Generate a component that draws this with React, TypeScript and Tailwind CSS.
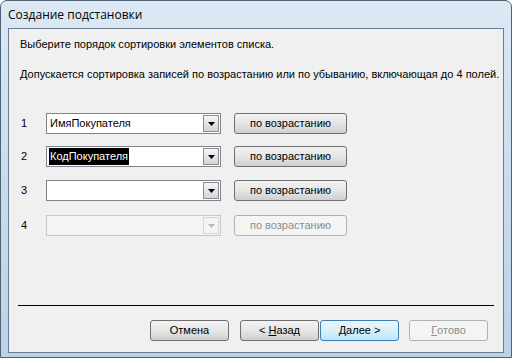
import React from 'react';

const rows = [
  { n: '1', value: 'ИмяПокупателя', selected: false, disabled: false },
  { n: '2', value: 'КодПокупателя', selected: true, disabled: false },
  { n: '3', value: '', selected: false, disabled: false },
  { n: '4', value: '', selected: false, disabled: true },
];

function Arrow({ disabled }: { disabled?: boolean }) {
  return (
    <svg width="7" height="4" viewBox="0 0 7 4">
      <path d="M0 0H7L3.5 4Z" fill={disabled ? '#b8b8b8' : '#000'} />
    </svg>
  );
}

function Combo({ value, selected, disabled }: { value: string; selected: boolean; disabled: boolean }) {
  return (
    <div
      className={`flex items-center w-[175px] h-[21px] border ${
        disabled ? 'border-[#c6c6c6] bg-[#f4f4f4]' : 'border-[#7f8590] bg-white'
      }`}
    >
      <div className="flex-1 pl-[2px] h-full flex items-center">
        {value && (
          <span className={`px-[1px] leading-[17px] ${selected ? 'bg-black text-white' : ''}`}>{value}</span>
        )}
      </div>
      <div
        className={`w-[16px] h-[17px] mr-[1px] flex items-center justify-center border ${
          disabled
            ? 'border-[#d6d6d6] bg-[#f4f4f4]'
            : 'border-[#8d8d8d] bg-gradient-to-b from-[#f6f6f6] to-[#d4d4d4]'
        }`}
      >
        <Arrow disabled={disabled} />
      </div>
    </div>
  );
}

function Btn({
  children,
  disabled,
  primary,
  className = '',
}: {
  children: React.ReactNode;
  disabled?: boolean;
  primary?: boolean;
  className?: string;
}) {
  let look = 'border-[#707070] bg-gradient-to-b from-[#f2f2f2] via-[#e6e6e6] to-[#cfcfcf] text-black';
  if (primary) look = 'border-[#3c7fb1] bg-gradient-to-b from-[#eaf6fd] via-[#d9effa] to-[#bee6fd] text-black';
  if (disabled) look = 'border-[#adb2b5] bg-[#f4f4f4] text-[#8d8d8d]';
  return (
    <div className={`h-[21px] flex items-center justify-center rounded-[3px] border ${look} ${className}`}>
      {children}
    </div>
  );
}

export default function App() {
  return (
    <div
      className="w-[512px] h-[358px] flex flex-col px-[7px] pb-[4px] rounded-t-[7px] border border-[#4f6275] bg-gradient-to-b from-[#dce9f5] via-[#c9dcef] to-[#bcd2e8] overflow-hidden"
      style={{ fontFamily: '"Liberation Sans", Arial, sans-serif' }}
    >
      <div
        className="h-[27px] flex items-center text-[12px] text-black"
        style={{ fontFamily: '"Open Sans", "Noto Sans", sans-serif' }}
      >
        Создание подстановки
      </div>
      <div className="flex-1 flex flex-col border border-[#6e7f90] bg-[#f0f0f0] text-[11px] text-black">
        <div className="pl-[11px] pt-[9px] leading-[13px]">Выберите порядок сортировки элементов списка.</div>
        <div className="pl-[11px] mt-[17px] leading-[13px]">
          Допускается сортировка записей по возрастанию или по убыванию, включающая до 4 полей.
        </div>
        <div className="flex flex-col pl-[12px] mt-[32px]">
          {rows.map((r, i) => (
            <div
              key={r.n}
              className={`flex items-center ${i === 1 ? 'mt-[12px]' : i === 2 ? 'mt-[13px]' : i === 3 ? 'mt-[14px]' : ''}`}
            >
              <div className="w-[25px]">{r.n}</div>
              <Combo value={r.value} selected={r.selected} disabled={r.disabled} />
              <Btn disabled={r.disabled} className="ml-[13px] w-[113px]">
                по возрастанию
              </Btn>
            </div>
          ))}
        </div>
        <div className="mt-auto mx-[9px] border-t border-black"></div>
        <div className="flex justify-end pr-[15px] pt-[14px] pb-[11px]">
          <Btn className="w-[79px]">Отмена</Btn>
          <Btn className="w-[79px] ml-[11px]">
            &lt; <span className="underline ml-[3px]">Н</span>азад
          </Btn>
          <Btn primary className="w-[79px] ml-[1px]">
            <span className="underline">Д</span>алее &gt;
          </Btn>
          <Btn disabled className="w-[79px] ml-[10px]">
            <span className="underline">Г</span>отово
          </Btn>
        </div>
      </div>
    </div>
  );
}
